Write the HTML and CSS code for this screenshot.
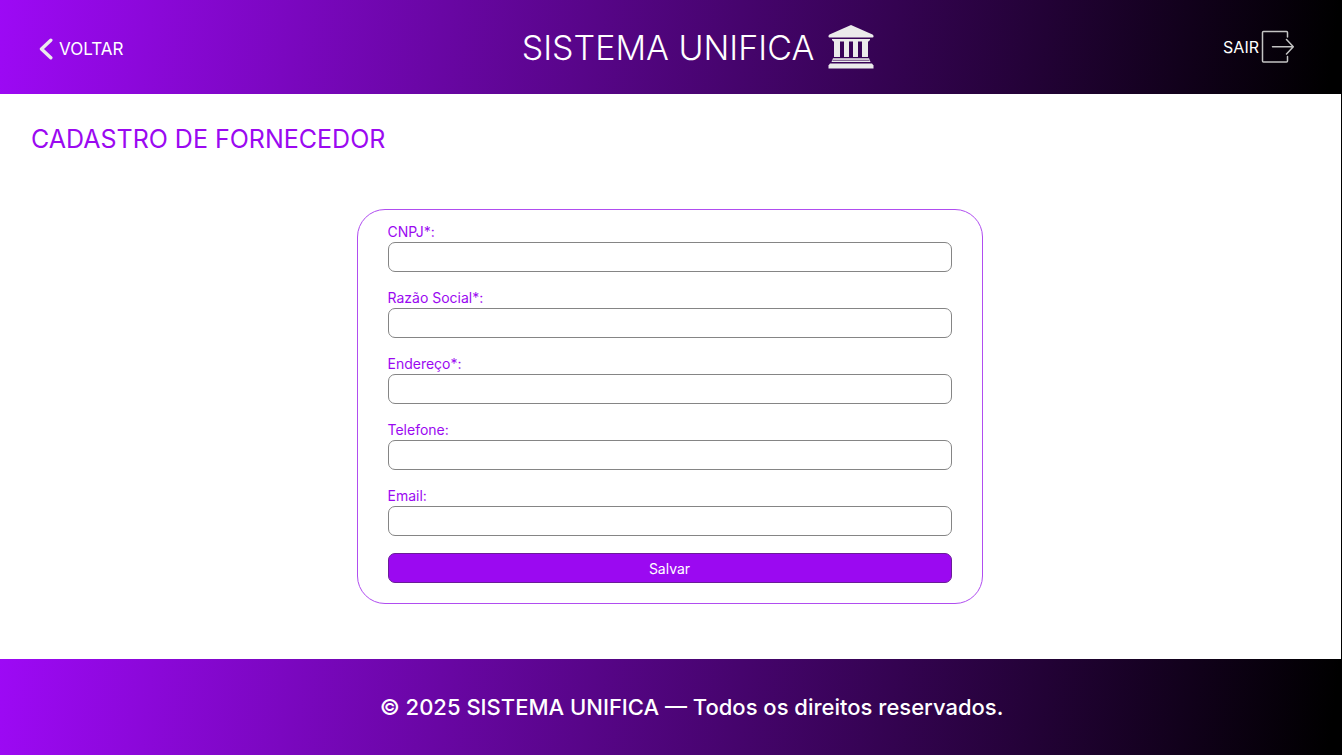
FILE: index.html
```
<!DOCTYPE html>
<html lang="pt-BR">
<head>
<meta charset="utf-8">
<meta name="viewport" content="width=device-width, initial-scale=1">
<title>Sistema Unifica</title>
<link rel="stylesheet" href="styles.css">
</head>
<body class="page">
<header class="topbar">
  <a class="back" href="#">
    <svg class="back-icon" viewBox="0 0 14 22" aria-hidden="true"><path d="M11.8 2.2 L2.5 11 L11.8 19.8" fill="none" stroke="currentColor" stroke-width="3.4" stroke-linecap="round" stroke-linejoin="round"/></svg>
    <span>VOLTAR</span>
  </a>
  <div class="brand">
    <h1 class="brand-name">SISTEMA UNIFICA</h1>
    <svg class="brand-icon" viewBox="0 0 46 46" aria-hidden="true">
      <g fill="currentColor">
        <path d="M23 1 L44.5 10.5 Q45.5 11 45.5 12 V12.8 Q45.5 13.6 44.5 13.6 H1.5 Q.5 13.6 .5 12.8 V12 Q.5 11 1.5 10.5 Z"/>
        <path d="M4 15 H42 V16 L40.5 17.5 H5.5 L4 16 Z"/>
        <path d="M6 17 H12 V33 H6 Z M16 17 H21 V33 H16 Z M25 17 H30 V33 H25 Z M34 17 H40 V33 H34 Z"/>
        <path d="M5 34.3 H41 L42.5 38 H3.5 Z"/>
        <path d="M2 39.5 H44 L45.5 41.5 V44.6 H.5 V41.5 Z"/>
      </g>
      <path d="M4.5 36.3 H41.5" stroke="#3b0457" stroke-width=".7"/>
    </svg>
  </div>
  <a class="exit" href="#">
    <span>SAIR</span>
    <svg class="exit-icon" viewBox="0 0 34 34" aria-hidden="true"><path d="M26.5 7 V2.5 Q26.5 1.5 25.5 1.5 H2.5 Q1.5 1.5 1.5 2.5 V31 Q1.5 32 2.5 32 H25.5 Q26.5 32 26.5 31 V26.5 M11.5 16.7 H32 M25.5 9.5 L32.3 16.7 L25.5 24" fill="none" stroke="currentColor" stroke-width="1.5" stroke-linecap="round" stroke-linejoin="round"/></svg>
  </a>
</header>
<main class="content">
  <h2 class="title">CADASTRO DE FORNECEDOR</h2>
  <form class="card">
    <div class="field"><label for="cnpj">CNPJ*:</label><input id="cnpj" type="text"></div>
    <div class="field"><label for="razao">Razão Social*:</label><input id="razao" type="text"></div>
    <div class="field"><label for="endereco">Endereço*:</label><input id="endereco" type="text"></div>
    <div class="field"><label for="telefone">Telefone:</label><input id="telefone" type="tel"></div>
    <div class="field"><label for="email">Email:</label><input id="email" type="email"></div>
    <button class="save" type="submit">Salvar</button>
  </form>
</main>
<footer class="footer">© 2025 SISTEMA UNIFICA — Todos os direitos reservados.</footer>
</body>
</html>
```
FILE: styles.css
```
* { box-sizing: border-box; }

.page {
  display: flex;
  flex-direction: column;
  min-height: 100vh;
  margin: 0;
  background: #fff;
  font-family: Inter, "Liberation Sans", sans-serif;
}

.topbar,
.footer {
  background: linear-gradient(97deg, #9d09f5 0%, #000 99%);
  color: #fff;
}

.topbar {
  display: grid;
  grid-template-columns: 1fr auto 1fr;
  align-items: center;
  padding: 18px 47px 18px 39px;
  min-height: 94px;
}

.back,
.exit {
  display: flex;
  align-items: center;
  color: inherit;
  line-height: 24px;
  text-decoration: none;
}

.back { gap: 6px; justify-self: start; padding-top: 3px; font-size: 17px; }
.back-icon { width: 14px; height: 24px; color: #ebebeb; }

.exit { gap: 2px; justify-self: end; padding-bottom: 1px; font-size: 16px; }
.exit-icon { width: 34px; height: 34px; color: #c4c4c4; }

.brand { display: flex; align-items: center; gap: 14px; padding-left: 62px; }
.brand-name { margin: 0; padding-top: 2px; font-size: 34px; font-weight: 300; line-height: 44px; }
.brand-icon { width: 46px; height: 46px; color: #ebebeb; }

.content {
  display: flex;
  flex: 1;
  flex-direction: column;
  padding: 28px 33px 55px 31px;
  border-right: 1px solid #000;
}

.title {
  margin: 0;
  color: #9b09f1;
  font-size: 25px;
  font-weight: 400;
  line-height: 34px;
}

.card {
  display: flex;
  flex-direction: column;
  gap: 17px;
  align-self: center;
  width: 100%;
  max-width: 626px;
  margin-top: 53px;
  padding: 13px 30px 20px;
  border: 1px solid #b04df0;
  border-radius: 28px;
}

.field { display: flex; flex-direction: column; gap: 2px; }

.field label {
  color: #9b09f1;
  font-size: 14px;
  line-height: 17px;
}

.field input {
  width: 100%;
  height: 30px;
  padding: 0 10px;
  border: 1px solid #858585;
  border-radius: 7px;
  background: #fff;
  font: inherit;
  font-size: 14px;
}

.save {
  height: 30px;
  border: 1px solid #6a1c98;
  border-radius: 7px;
  background: #9b09f1;
  color: #fff;
  font-family: inherit;
  font-size: 14px;
}

.footer {
  min-height: 96px;
  padding: 32px 20px 32px 61px;
  font-size: 22px;
  font-weight: 500;
  line-height: 32px;
  text-align: center;
}
```
